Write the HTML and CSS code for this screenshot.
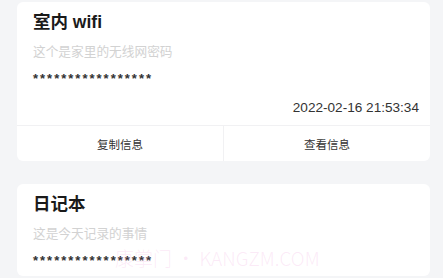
FILE: index.html
```html
<!DOCTYPE html>
<html lang="zh-CN">
  <head>
    <meta charset="UTF-8" />
    <meta name="viewport" content="width=device-width, initial-scale=1.0" />
    <title>密码本</title>
    <link rel="stylesheet" href="styles.css">
  </head>
  <body>
    <div class="list">
      <div class="card">
        <div class="card-body">
          <div class="title">室内 wifi</div>
          <div class="desc">这个是家里的无线网密码</div>
          <div class="secret">*****************</div>
          <div class="time">2022-02-16 21:53:34</div>
        </div>
        <div class="actions">
          <a href="#">复制信息</a>
          <a href="#">查看信息</a>
        </div>
      </div>

      <div class="card">
        <div class="card-body">
          <div class="title">日记本</div>
          <div class="desc">这是今天记录的事情</div>
          <div class="secret">*****************</div>
        </div>
      </div>
    </div>

    <div class="watermark">康掌门 • KANGZM.COM</div>
  </body>
</html>
```

FILE: styles.css
```css
body {
  font-family: "Liberation Sans", "Noto Sans CJK SC", sans-serif;
  background-color: #f4f5f7;
  color: #222;
  margin: 0;
  padding: 0;
  height: 278px;
  overflow: hidden;
  position: relative;
}

.list {
  padding: 2px 13px 0 17px;
}

.card {
  background: white;
  border-radius: 6px;
  margin-bottom: 23px;
}

.card-body {
  padding: 8px 16px 8px;
}

.title {
  font-size: 17.5px;
  line-height: 24px;
  font-weight: 600;
  color: #1a1a1a;
}

.desc {
  margin-top: 9px;
  font-size: 12.7px;
  line-height: 18px;
  color: #d2d2d2;
}

.secret {
  margin-top: 9px;
  height: 16px;
  font-size: 13px;
  line-height: 18px;
  font-weight: bold;
  letter-spacing: 2px;
  color: #333;
}

.time {
  margin-top: 13px;
  margin-right: -5px;
  text-align: right;
  font-size: 13.6px;
  line-height: 18px;
  color: #333;
}

.actions {
  display: flex;
  border-top: 1px solid #f1f1f3;
  height: 35px;
}

.actions a {
  flex: 1;
  display: flex;
  align-items: center;
  justify-content: center;
  font-size: 11.5px;
  color: #333;
  text-decoration: none;
}

.actions a + a {
  border-left: 1px solid #f1f1f3;
}

.watermark {
  position: absolute;
  left: 115px;
  top: 246px;
  font-family: "Noto Sans CJK SC", sans-serif;
  font-size: 19px;
  line-height: 24px;
  font-weight: 300;
  color: rgba(240, 160, 220, 0.22);
  white-space: nowrap;
  pointer-events: none;
}
```
